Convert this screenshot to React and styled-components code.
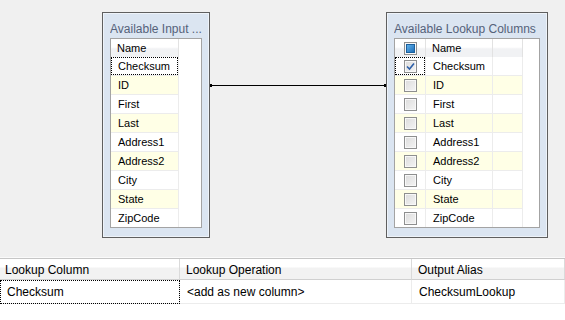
import React from 'react';
import styled, { createGlobalStyle } from 'styled-components';

const GlobalStyle = createGlobalStyle`
  html, body { margin: 0; padding: 0; background: #fff; }
  body {
    font-family: "Liberation Sans", Arial, sans-serif;
    font-size: 11px;
    color: #000;
  }
`;

const Page = styled.div`
  width: 565px;
  height: 320px;
  display: flex;
  flex-direction: column;
  overflow: hidden;
  background: #fff;
`;

// design surface: the tables are nodes placed on it
const Canvas = styled.div`
  position: relative;
  flex: none;
  height: 250px;
  background: #f0f0f0;
`;

const Panel = styled.div`
  position: absolute;
  left: ${p => p.$left}px;
  top: ${p => p.$top}px;
  width: ${p => p.$width}px;
  height: ${p => p.$height}px;
  box-sizing: border-box;
  display: flex;
  flex-direction: column;
  padding: 0 7px 9px 7px;
  background: #dbe5f1;
  border: 1px solid #5f5f5f;
  box-shadow: inset 0 0 0 1px #eef3f9;
`;

const Title = styled.div`
  flex: none;
  box-sizing: border-box;
  height: 25px;
  padding-top: 9px;
  line-height: 15px;
  font-size: 12px;
  color: #55627a;
  white-space: nowrap;
  overflow: hidden;
`;

const ListBox = styled.div`
  flex: 1;
  background: #fff;
  border: 1px solid #a3a3a3;
  overflow: hidden;
`;

const Row = styled.div`
  display: grid;
  grid-template-columns: ${p => p.$cols};
  height: ${p => (p.$head ? 18 : 19)}px;
`;

const HeadCell = styled.div`
  box-sizing: border-box;
  padding-left: 6px;
  line-height: 18px;
  background: linear-gradient(#ffffff 0%, #ffffff 45%, #f1f2f4 55%, #f1f2f4 100%);
  border-right: 1px solid #e2e2e2;
  border-bottom: 1px solid #d8d8d8;
  display: flex;
  align-items: center;
  justify-content: ${p => (p.$center ? 'center' : 'flex-start')};
  ${p => p.$center && 'padding-left: 0;'}
`;

const Cell = styled.div`
  position: relative;
  box-sizing: border-box;
  padding-left: 7px;
  line-height: 18px;
  background: ${p => (p.$alt ? '#ffffe6' : '#fff')};
  border-right: 1px solid #ececec;
  border-bottom: 1px solid #ececec;
  display: flex;
  align-items: center;
  justify-content: ${p => (p.$center ? 'center' : 'flex-start')};
  ${p => p.$center && 'padding-left: 0;'}
  ${p => p.$focus && `
    &::after {
      content: '';
      position: absolute;
      inset: 0 0 0 0;
      border: 1px dotted #000;
    }
  `}
`;

const Blank = styled.div`
  background: #fff;
`;

const Box = styled.span`
  box-sizing: border-box;
  width: 13px;
  height: 13px;
  border: 1px solid #8e8f8f;
  background: linear-gradient(135deg, #dcdcdc 0%, #f4f4f4 100%);
  box-shadow: inset 0 0 0 1px #f8f8f8;
  display: flex;
  align-items: center;
  justify-content: center;
`;

const AllMark = styled.span`
  width: 7px;
  height: 7px;
  background: linear-gradient(135deg, #5fb0ea 0%, #1f6fb8 100%);
  border: 1px solid #1b5f9c;
`;

const Check = () => (
  <svg width="9" height="9" viewBox="0 0 9 9">
    <path d="M1 4.5 L3.5 7 L8 1.5" fill="none" stroke="#2d5fa8" strokeWidth="1.6" />
  </svg>
);

const Connector = styled.svg`
  position: absolute;
  left: 209px;
  top: 82px;
`;

const Splitter = styled.div`
  flex: none;
  height: 8px;
  background: #f0f0f0;
  border-bottom: 1px solid #c6c6c6;
  box-shadow: inset 0 -1px 0 #fafafa;
`;

const Grid = styled.div`
  display: grid;
  grid-template-columns: 180px 232px 1fr;
  font-size: 12px;
`;

const GridHead = styled.div`
  height: 21px;
  box-sizing: border-box;
  padding-left: ${p => (p.$first ? 5 : 6)}px;
  line-height: 22px;
  background: linear-gradient(#ffffff 0%, #ffffff 40%, #f2f2f2 45%, #f2f2f2 100%);
  border-right: 1px solid #dadada;
  border-bottom: 1px solid #d0d0d0;
`;

const GridCell = styled.div`
  height: 24px;
  box-sizing: border-box;
  padding-left: 7px;
  line-height: 25px;
  border-right: 1px solid #ececec;
  border-bottom: 1px solid #ececec;
  ${p => p.$focus && 'outline: 1px dotted #000; outline-offset: -1px;'}
`;

const fields = ['Checksum', 'ID', 'First', 'Last', 'Address1', 'Address2', 'City', 'State', 'ZipCode'];

const leftCols = '68px 1fr';
const rightCols = '31px 67px 30px 1fr';

export default function App() {
  return (
    <Page>
      <GlobalStyle />
      <Canvas>
        <Panel $left={102} $top={12} $width={108} $height={226}>
          <Title>Available Input ...</Title>
          <ListBox>
            <Row $head $cols={leftCols}>
              <HeadCell>Name</HeadCell>
              <Blank />
            </Row>
            {fields.map((f, i) => (
              <Row key={f} $cols={leftCols}>
                <Cell $alt={i % 2 === 1} $focus={i === 0}>{f}</Cell>
                <Blank />
              </Row>
            ))}
          </ListBox>
        </Panel>

        <Connector width="180" height="7" viewBox="0 0 180 7">
          <line x1="1" y1="3.5" x2="179" y2="3.5" stroke="#000" strokeWidth="1" />
          <rect x="1" y="2" width="2" height="3" fill="#000" />
          <rect x="175" y="2" width="3" height="3" fill="#000" />
        </Connector>

        <Panel $left={386} $top={12} $width={162} $height={226}>
          <Title>Available Lookup Columns</Title>
          <ListBox>
            <Row $head $cols={rightCols}>
              <HeadCell $center>
                <Box><AllMark /></Box>
              </HeadCell>
              <HeadCell>Name</HeadCell>
              <HeadCell />
              <Blank />
            </Row>
            {fields.map((f, i) => (
              <Row key={f} $cols={rightCols}>
                <Cell $center $alt={i % 2 === 1} $focus={i === 0}>
                  <Box>{i === 0 && <Check />}</Box>
                </Cell>
                <Cell $alt={i % 2 === 1}>{f}</Cell>
                <Cell $alt={i % 2 === 1} />
                <Blank />
              </Row>
            ))}
          </ListBox>
        </Panel>
      </Canvas>

      <Splitter />
      <Grid>
        <GridHead $first>Lookup Column</GridHead>
        <GridHead>Lookup Operation</GridHead>
        <GridHead>Output Alias</GridHead>
        <GridCell $focus>Checksum</GridCell>
        <GridCell>&lt;add as new column&gt;</GridCell>
        <GridCell>ChecksumLookup</GridCell>
      </Grid>
    </Page>
  );
}
